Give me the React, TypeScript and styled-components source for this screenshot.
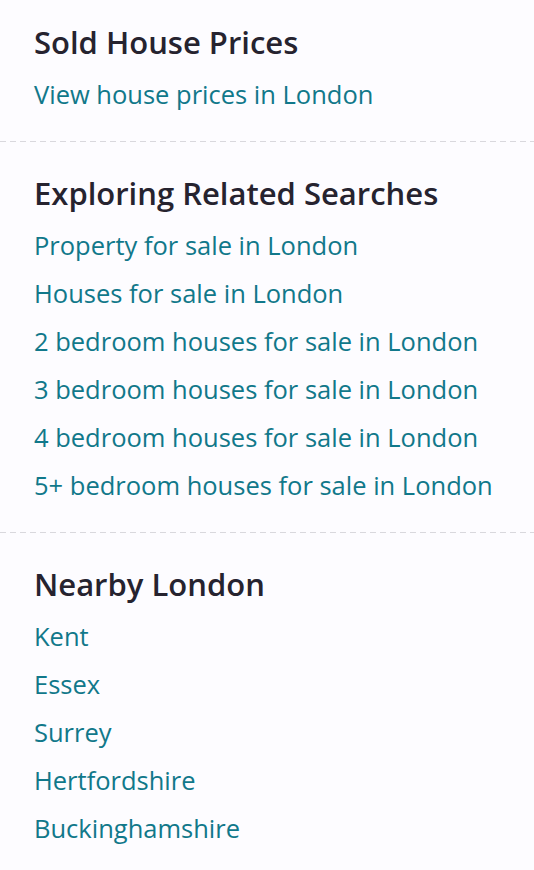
import React from 'react'
import styled, { createGlobalStyle } from 'styled-components'

const GlobalStyle = createGlobalStyle`
  html, body {
    margin: 0;
    padding: 0;
    background: #fdfcff;
  }
  body {
    font-family: 'Open Sans', 'Noto Sans', sans-serif;
  }
`

const sections = [
  {
    title: 'Sold House Prices',
    links: ['View house prices in London'],
  },
  {
    title: 'Exploring Related Searches',
    links: [
      'Property for sale in London',
      'Houses for sale in London',
      '2 bedroom houses for sale in London',
      '3 bedroom houses for sale in London',
      '4 bedroom houses for sale in London',
      '5+ bedroom houses for sale in London',
    ],
  },
  {
    title: 'Nearby London',
    links: ['Kent', 'Essex', 'Surrey', 'Hertfordshire', 'Buckinghamshire'],
  },
]

const App = () => {
  return (
    <Page>
      <GlobalStyle />
      {sections.map((s, i) => (
        <React.Fragment key={s.title}>
          {i > 0 && <Divider />}
          <Section first={i === 0}>
            <Heading>{s.title}</Heading>
            <LinkList>
              {s.links.map((l) => (
                <li key={l}>
                  <LinkItem href="#">{l}</LinkItem>
                </li>
              ))}
            </LinkList>
          </Section>
        </React.Fragment>
      ))}
    </Page>
  )
}

const Page = styled.div`
  width: 534px;
  min-height: 870px;
  background: #fdfcff;
`

const Divider = styled.hr`
  margin: 0;
  border: none;
  height: 1px;
  background-image: repeating-linear-gradient(
    to right,
    #d9d8dd 0,
    #d9d8dd 6px,
    transparent 6px,
    transparent 10px
  );
`

const Section = styled.section<{ first?: boolean }>`
  padding: ${(p) => (p.first ? '18px' : '27px')} 34px 23px;
`

const Heading = styled.h2`
  margin: 0 0 4px;
  font-size: 31px;
  line-height: 48px;
  font-weight: 600;
  color: #26232f;
`

const LinkList = styled.ul`
  list-style: none;
  margin: 0;
  padding: 0;
`

const LinkItem = styled.a`
  display: block;
  font-size: 25.5px;
  line-height: 48px;
  color: #11788a;
  text-decoration: none;
`

export default App
